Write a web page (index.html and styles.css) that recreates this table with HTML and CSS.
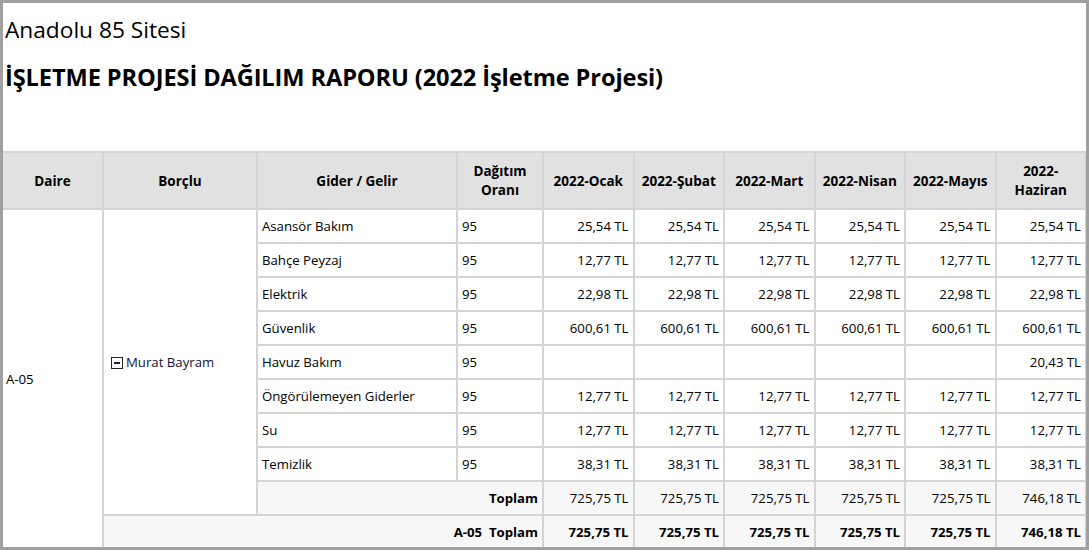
FILE: index.html
```html
<!DOCTYPE html>
<html lang="tr">
<head>
<meta charset="utf-8">
<title>İşletme Projesi Dağılım Raporu</title>
<link rel="stylesheet" href="styles.css">
</head>
<body>
<div class="frame">
  <header class="report-head">
    <div class="site">Anadolu 85 Sitesi</div>
    <h1 class="title">İŞLETME PROJESİ DAĞILIM RAPORU (2022 İşletme Projesi)</h1>
  </header>
  <table class="grid">
    <colgroup>
      <col class="c-daire"><col class="c-borclu"><col class="c-gider"><col class="c-oran">
      <col class="c-ay"><col class="c-ay"><col class="c-ay"><col class="c-ay"><col class="c-ay"><col class="c-ay">
    </colgroup>
    <thead>
      <tr>
        <th>Daire</th><th>Borçlu</th><th>Gider / Gelir</th><th>Dağıtım<br>Oranı</th>
        <th>2022-Ocak</th><th>2022-Şubat</th><th>2022-Mart</th><th>2022-Nisan</th><th>2022-Mayıs</th><th>2022-<br>Haziran</th>
      </tr>
    </thead>
    <tbody>
      <tr>
        <td rowspan="10" class="daire">A-05</td>
        <td rowspan="9" class="borclu"><span class="toggle"></span>Murat Bayram</td>
        <td>Asansör Bakım</td><td>95</td>
        <td class="num">25,54 TL</td><td class="num">25,54 TL</td><td class="num">25,54 TL</td><td class="num">25,54 TL</td><td class="num">25,54 TL</td><td class="num">25,54 TL</td>
      </tr>
      <tr>
        <td>Bahçe Peyzaj</td><td>95</td>
        <td class="num">12,77 TL</td><td class="num">12,77 TL</td><td class="num">12,77 TL</td><td class="num">12,77 TL</td><td class="num">12,77 TL</td><td class="num">12,77 TL</td>
      </tr>
      <tr>
        <td>Elektrik</td><td>95</td>
        <td class="num">22,98 TL</td><td class="num">22,98 TL</td><td class="num">22,98 TL</td><td class="num">22,98 TL</td><td class="num">22,98 TL</td><td class="num">22,98 TL</td>
      </tr>
      <tr>
        <td>Güvenlik</td><td>95</td>
        <td class="num">600,61 TL</td><td class="num">600,61 TL</td><td class="num">600,61 TL</td><td class="num">600,61 TL</td><td class="num">600,61 TL</td><td class="num">600,61 TL</td>
      </tr>
      <tr>
        <td>Havuz Bakım</td><td>95</td>
        <td class="num"></td><td class="num"></td><td class="num"></td><td class="num"></td><td class="num"></td><td class="num">20,43 TL</td>
      </tr>
      <tr>
        <td>Öngörülemeyen Giderler</td><td>95</td>
        <td class="num">12,77 TL</td><td class="num">12,77 TL</td><td class="num">12,77 TL</td><td class="num">12,77 TL</td><td class="num">12,77 TL</td><td class="num">12,77 TL</td>
      </tr>
      <tr>
        <td>Su</td><td>95</td>
        <td class="num">12,77 TL</td><td class="num">12,77 TL</td><td class="num">12,77 TL</td><td class="num">12,77 TL</td><td class="num">12,77 TL</td><td class="num">12,77 TL</td>
      </tr>
      <tr>
        <td>Temizlik</td><td>95</td>
        <td class="num">38,31 TL</td><td class="num">38,31 TL</td><td class="num">38,31 TL</td><td class="num">38,31 TL</td><td class="num">38,31 TL</td><td class="num">38,31 TL</td>
      </tr>
      <tr class="subtotal">
        <td colspan="2" class="label">Toplam</td>
        <td class="num">725,75 TL</td><td class="num">725,75 TL</td><td class="num">725,75 TL</td><td class="num">725,75 TL</td><td class="num">725,75 TL</td><td class="num">746,18 TL</td>
      </tr>
      <tr class="total">
        <td colspan="3" class="label">A-05&nbsp; Toplam</td>
        <td class="num">725,75 TL</td><td class="num">725,75 TL</td><td class="num">725,75 TL</td><td class="num">725,75 TL</td><td class="num">725,75 TL</td><td class="num">746,18 TL</td>
      </tr>
    </tbody>
  </table>
</div>
</body>
</html>
```
FILE: styles.css
```css
html, body {
  margin: 0;
  padding: 0;
  background: #fff;
}
body {
  font-family: "Segoe UI", "Open Sans", "Noto Sans", sans-serif;
  color: #000;
}
.frame {
  box-sizing: border-box;
  width: 1089px;
  height: 550px;
  border: 3px solid #a0a0a0;
  overflow: hidden;
  background: #fff;
}
.report-head {
  height: 148px;
  padding-left: 2px;
  box-sizing: border-box;
}
.site {
  font-size: 22.7px;
  line-height: 30px;
  padding-top: 12px;
}
.title {
  margin: 0;
  font-size: 23.6px;
  font-weight: 700;
  line-height: 30px;
  padding-top: 17px;
  letter-spacing: -0.1px;
}
.grid {
  width: 100%;
  border-collapse: collapse;
  table-layout: fixed;
  font-size: 13.2px;
}
.c-daire { width: 100px; }
.c-borclu { width: 154px; }
.c-gider { width: 200px; }
.c-oran { width: 86px; }
.c-ay { width: 90.5px; }
.grid th, .grid td {
  border: 2px solid #d4d4d4;
  padding: 0 4px;
  height: 32px;
  white-space: nowrap;
  overflow: hidden;
}
.grid th {
  background: #e1e1e1;
  font-weight: 700;
  font-size: 13.5px;
  height: 54px;
  line-height: 19px;
  text-align: center;
  padding: 1px 2px 0;
}
.grid th:first-child, .grid td.daire { border-left: 0; }
.grid td.daire {
  vertical-align: middle;
  padding-left: 3px;
}
.grid td.borclu {
  vertical-align: middle;
  padding-left: 7px;
  color: #14143c;
}
.toggle {
  display: inline-block;
  width: 10px;
  height: 10px;
  border: 1.5px solid #222;
  box-sizing: content-box;
  vertical-align: -2px;
  margin-right: 3px;
  position: relative;
  background: #fff;
}
.toggle::after {
  content: "";
  position: absolute;
  left: 2px;
  right: 2px;
  top: 4px;
  height: 2px;
  background: #222;
}
.num { text-align: right; }
.subtotal td, .total td {
  background: #f7f7f7;
}
.grid tr.subtotal td.label, .grid tr.total td.label {
  text-align: right;
  font-weight: 700;
}
.total .num { font-weight: 700; }
.total td { border-bottom: 0; }
```
